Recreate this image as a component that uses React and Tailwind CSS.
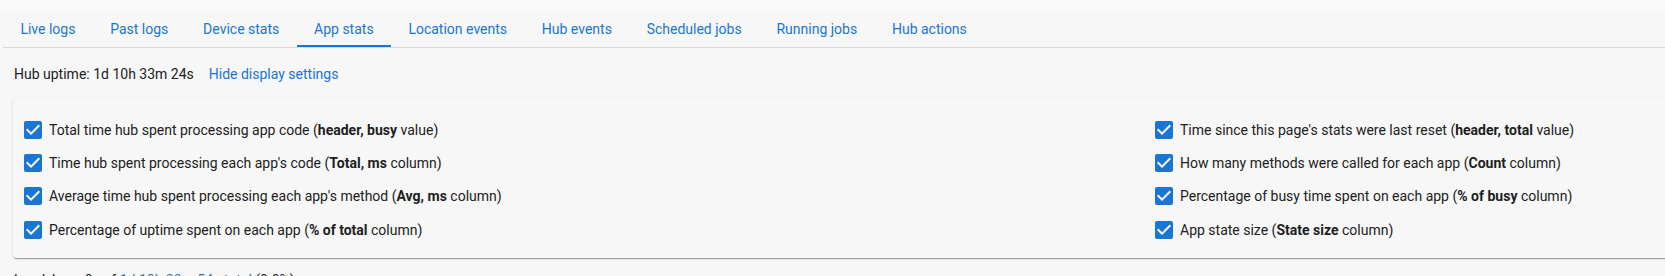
import React from "react";

const tabs = [
  "Live logs",
  "Past logs",
  "Device stats",
  "App stats",
  "Location events",
  "Hub events",
  "Scheduled jobs",
  "Running jobs",
  "Hub actions",
];

function CheckIcon() {
  return (
    <svg viewBox="0 0 24 24" className="w-6 h-6 shrink-0" aria-hidden="true">
      <path
        fill="#1976d2"
        d="M19 3H5c-1.11 0-2 .9-2 2v14c0 1.1.89 2 2 2h14c1.11 0 2-.9 2-2V5c0-1.1-.89-2-2-2zm-9 14l-5-5 1.41-1.41L10 14.17l7.59-7.59L19 8l-9 9z"
      />
    </svg>
  );
}

function Row({ pre, bold, post }) {
  return (
    <div className="h-[33.33px] flex items-center">
      <CheckIcon />
      <span className="ml-1 whitespace-nowrap">
        {pre}(<b className="font-bold">{bold}</b> {post})
      </span>
    </div>
  );
}

const left = [
  ["Total time hub spent processing app code ", "header, busy", "value"],
  ["Time hub spent processing each app's code ", "Total, ms", "column"],
  ["Average time hub spent processing each app's method ", "Avg, ms", "column"],
  ["Percentage of uptime spent on each app ", "% of total", "column"],
];
const right = [
  ["Time since this page's stats were last reset ", "header, total", "value"],
  ["How many methods were called for each app ", "Count", "column"],
  ["Percentage of busy time spent on each app ", "% of busy", "column"],
  ["App state size ", "State size", "column"],
];

export default function App() {
  return (
    <div
      className="w-full h-[276px] overflow-hidden bg-[#fafafa] text-[14px] leading-5 text-[#212121]"
      style={{ fontFamily: "Roboto, 'Noto Sans', sans-serif" }}
    >
      <div className="h-3" />
      <div className="bg-[#f7f7f7] min-h-[264px]">
        <div className="ml-[3px] flex border-b border-[#d9d9d9]">
          {tabs.map((t) => (
            <div
              key={t}
              className={
                "h-[35px] px-[17.4px] flex items-center whitespace-nowrap text-[#1976d2] border-b-2 " +
                (t === "App stats" ? "border-[#1976d2]" : "border-transparent")
              }
            >
              {t}
            </div>
          ))}
        </div>
        <div className="px-[13px]">
          <div className="mt-4 h-5 flex items-center pl-px whitespace-nowrap">
            <span>Hub uptime: 1d 10h 33m 24s</span>
            <span className="ml-[15px] text-[#1976d2]">Hide display settings</span>
          </div>
          <div className="mt-[14px] w-[2300px] rounded-[4px] bg-[#f7f7f7] pl-2 pt-[15px] pb-3 shadow-[0px_2px_1px_-1px_rgba(0,0,0,0.2),0px_1px_1px_0px_rgba(0,0,0,0.14),0px_1px_3px_0px_rgba(0,0,0,0.12)]">
            <div className="grid grid-cols-[1131px_1fr]">
              <div>
                {left.map((r) => (
                  <Row key={r[1]} pre={r[0]} bold={r[1]} post={r[2]} />
                ))}
              </div>
              <div>
                {right.map((r) => (
                  <Row key={r[1]} pre={r[0]} bold={r[1]} post={r[2]} />
                ))}
              </div>
            </div>
          </div>
          <div className="mt-3 pl-px whitespace-nowrap">
            Load: busy 0s of <span className="text-[#1976d2]">1d 10h 33m 54s total</span> (0.0%)
          </div>
        </div>
      </div>
    </div>
  );
}
